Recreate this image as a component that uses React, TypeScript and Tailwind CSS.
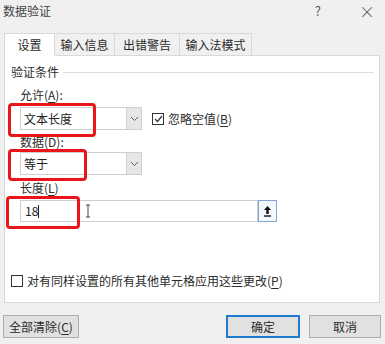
import React from 'react';

const U: React.FC<{ children: React.ReactNode }> = ({ children }) => (
  <span className="underline underline-offset-2">{children}</span>
);

const Chevron = () => (
  <svg width="9" height="6" viewBox="0 0 9 6" fill="none">
    <path d="M1 1l3.5 3.5L8 1" stroke="#606060" strokeWidth="1" />
  </svg>
);

const Check = () => (
  <svg width="9" height="8" viewBox="0 0 9 8" fill="none">
    <path d="M1 4l2.5 2.5L8 1" stroke="#333" strokeWidth="1.2" />
  </svg>
);

const RedBox: React.FC<{ className: string }> = ({ className }) => (
  <div className={`absolute border-[3px] border-[#e8161b] rounded-[4px] pointer-events-none ${className}`} />
);

const Combo: React.FC<{ value: string }> = ({ value }) => (
  <div className="flex w-[122px] h-[23px] border border-[#cfcfcf] bg-white">
    <div className="flex-1 flex items-center pl-[3px] text-[12px] text-[#222]">{value}</div>
    <div className="w-[15px] bg-[#e6e6e6] border-l border-[#d4d4d4] flex items-center justify-center">
      <Chevron />
    </div>
  </div>
);

export default function App() {
  return (
    <div
      className="relative w-[385px] h-[344px] bg-[#f0f0f0] text-[#2b2b2b] overflow-hidden"
      style={{ fontFamily: '"Noto Sans CJK SC", "Noto Sans", sans-serif' }}
    >
      {/* 标题栏 */}
      <div className="flex items-center h-[22px] pl-[3px] pr-[10px] text-[12px] text-[#444]">
        <span>数据验证</span>
        <span className="ml-auto mr-[38px] text-[13px] text-[#555]">?</span>
        <span className="text-[16px] font-light text-[#555]">×</span>
      </div>

      {/* 标签页 */}
      <div className="flex ml-[4px] mt-[11px] h-[22px] text-[12px]">
        <div className="w-[51px] bg-white border border-b-0 border-[#d9d9d9] flex items-center justify-center h-[23px] relative z-10">
          设置
        </div>
        <div className="w-[60px] border-t border-r border-[#d9d9d9] flex items-center justify-center">输入信息</div>
        <div className="w-[65px] border-t border-r border-[#d9d9d9] flex items-center justify-center">出错警告</div>
        <div className="w-[72px] border-t border-r border-[#d9d9d9] flex items-center justify-center">输入法模式</div>
      </div>

      {/* 面板 */}
      <div className="relative ml-[4px] w-[376px] h-[248px] bg-white border border-[#d9d9d9] text-[12px]">
        <div className="flex items-center h-[18px] mt-[7px] pl-[6px] pr-[5px]">
          <span>验证条件</span>
          <div className="flex-1 h-px bg-[#dcdcdc] ml-[4px]" />
        </div>

        <div className="pl-[15px] mt-[6px] leading-[16px]">
          允许(<U>A</U>):
        </div>
        <div className="flex items-center pl-[15px] mt-[4px]">
          <Combo value="文本长度" />
          <div className="ml-[10px] w-[12px] h-[12px] border border-[#333] flex items-center justify-center bg-white">
            <Check />
          </div>
          <span className="ml-[4px]">
            忽略空值(<U>B</U>)
          </span>
        </div>

        <div className="pl-[15px] mt-[4px] leading-[16px]">
          数据(<U>D</U>):
        </div>
        <div className="pl-[15px] mt-[2px]">
          <Combo value="等于" />
        </div>

        <div className="pl-[15px] mt-[5px] leading-[16px]">
          长度(<U>L</U>)
        </div>
        <div className="flex items-center pl-[15px] mt-[4px]">
          <div className="w-[238px] h-[22px] border border-[#cfcfcf] flex items-center pl-[4px] text-[12px] text-[#222]">
            18<span className="inline-block w-px h-[13px] bg-[#222]" />
            <svg className="ml-[46px]" width="6" height="14" viewBox="0 0 6 14" fill="none">
              <path d="M1 1h4M3 1v12M1 13h4" stroke="#444" strokeWidth="1" />
            </svg>
          </div>
          <div className="w-[19px] h-[22px] border border-[#7fa7d6] bg-[#f4f8fc] flex items-center justify-center">
            <svg width="9" height="12" viewBox="0 0 9 12" fill="none">
              <path d="M4.5 1L1 5h2.3v4h2.4V5H8z" fill="#111" />
              <path d="M1 11h7" stroke="#111" strokeWidth="1.4" />
            </svg>
          </div>
        </div>

        <div className="absolute left-[6px] bottom-[12px] flex items-center">
          <div className="w-[12px] h-[12px] border border-[#333] bg-white" />
          <span className="ml-[4px]">
            对有同样设置的所有其他单元格应用这些更改(<U>P</U>)
          </span>
        </div>
      </div>

      {/* 按钮 */}
      <div className="flex items-center mt-[12px] pl-[3px] pr-[4px] text-[12px]">
        <div className="w-[76px] h-[23px] bg-[#e1e1e1] border border-[#adadad] flex items-center justify-center">
          全部清除(<U>C</U>)
        </div>
        <div className="ml-auto w-[74px] h-[23px] bg-[#e1e1e1] border-2 border-[#1f7ad1] flex items-center justify-center">
          确定
        </div>
        <div className="ml-[9px] w-[72px] h-[23px] bg-[#e1e1e1] border border-[#adadad] flex items-center justify-center">
          取消
        </div>
      </div>

      {/* 红框标注 */}
      <RedBox className="left-[8px] top-[103px] w-[88px] h-[34px]" />
      <RedBox className="left-[8px] top-[149px] w-[79px] h-[32px]" />
      <RedBox className="left-[6px] top-[196px] w-[74px] h-[33px]" />
    </div>
  );
}
